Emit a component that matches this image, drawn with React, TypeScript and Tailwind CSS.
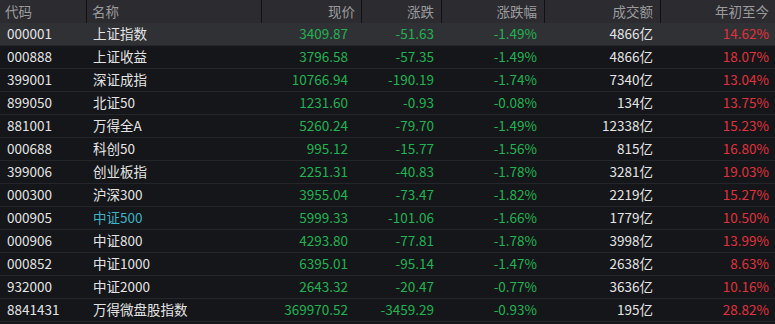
import React from "react"

type Row = {
  code: string
  name: string
  price: string
  change: string
  pct: string
  volume: string
  ytd: string
  highlight?: boolean
}

const rows: Row[] = [
  { code: "000001", name: "上证指数", price: "3409.87", change: "-51.63", pct: "-1.49%", volume: "4866亿", ytd: "14.62%" },
  { code: "000888", name: "上证收益", price: "3796.58", change: "-57.35", pct: "-1.49%", volume: "4866亿", ytd: "18.07%" },
  { code: "399001", name: "深证成指", price: "10766.94", change: "-190.19", pct: "-1.74%", volume: "7340亿", ytd: "13.04%" },
  { code: "899050", name: "北证50", price: "1231.60", change: "-0.93", pct: "-0.08%", volume: "134亿", ytd: "13.75%" },
  { code: "881001", name: "万得全A", price: "5260.24", change: "-79.70", pct: "-1.49%", volume: "12338亿", ytd: "15.23%" },
  { code: "000688", name: "科创50", price: "995.12", change: "-15.77", pct: "-1.56%", volume: "815亿", ytd: "16.80%" },
  { code: "399006", name: "创业板指", price: "2251.31", change: "-40.83", pct: "-1.78%", volume: "3281亿", ytd: "19.03%" },
  { code: "000300", name: "沪深300", price: "3955.04", change: "-73.47", pct: "-1.82%", volume: "2219亿", ytd: "15.27%" },
  { code: "000905", name: "中证500", price: "5999.33", change: "-101.06", pct: "-1.66%", volume: "1779亿", ytd: "10.50%", highlight: true },
  { code: "000906", name: "中证800", price: "4293.80", change: "-77.81", pct: "-1.78%", volume: "3998亿", ytd: "13.99%" },
  { code: "000852", name: "中证1000", price: "6395.01", change: "-95.14", pct: "-1.47%", volume: "2638亿", ytd: "8.63%" },
  { code: "932000", name: "中证2000", price: "2643.32", change: "-20.47", pct: "-0.77%", volume: "3636亿", ytd: "10.16%" },
  { code: "8841431", name: "万得微盘股指数", price: "369970.52", change: "-3459.29", pct: "-0.93%", volume: "195亿", ytd: "28.82%" },
]

// 代码 | 名称 | 现价 | 涨跌 | 涨跌幅 | 成交额 | 年初至今
const cols = "grid grid-cols-[87px_175px_100px_80px_103px_116px_114px]"

export default function App() {
  return (
    <div
      className="w-[775px] h-[324px] bg-[#141619] text-[13.5px] leading-none overflow-hidden"
      style={{ fontFamily: '"Noto Sans CJK SC", "Noto Sans", sans-serif' }}
    >
      {/* header */}
      <div className={`${cols} h-[23px] bg-[#2c2c30] text-[#9b9b9e]`}>
        <div className="flex items-center pl-[5px] border-r border-[#101114]">代码</div>
        <div className="flex items-center pl-[5px] border-r border-[#101114]">名称</div>
        <div className="flex items-center justify-end pr-[6px] border-r border-[#101114]">现价</div>
        <div className="flex items-center justify-end pr-[7px] border-r border-[#101114]">涨跌</div>
        <div className="flex items-center justify-end pr-[7px] border-r border-[#101114]">涨跌幅</div>
        <div className="flex items-center justify-end pr-[7px] border-r border-[#101114]">成交额</div>
        <div className="flex items-center justify-end pr-[6px]">年初至今</div>
      </div>

      {rows.map((r, i) => (
        <div
          key={r.code}
          className={`${cols} h-[23px] border-b border-[#24262b] ${i === 0 ? "bg-[#303135]" : "bg-[#141619]"}`}
        >
          <div className="flex items-center pl-[7px] text-[#e4e4e4]">{r.code}</div>
          <div className={`flex items-center pl-[6px] ${r.highlight ? "text-[#3fb3c6]" : "text-[#e4e4e4]"}`}>{r.name}</div>
          <div className="flex items-center justify-end pr-[14px] text-[#21b352]">{r.price}</div>
          <div className="flex items-center justify-end pr-[8px] text-[#21b352]">{r.change}</div>
          <div className="flex items-center justify-end pr-[8px] text-[#21b352]">{r.pct}</div>
          <div className="flex items-center justify-end pr-[8px] text-[#e4e4e4]">{r.volume}</div>
          <div className="flex items-center justify-end pr-[6px] text-[#e0323c]">{r.ytd}</div>
        </div>
      ))}
    </div>
  )
}
